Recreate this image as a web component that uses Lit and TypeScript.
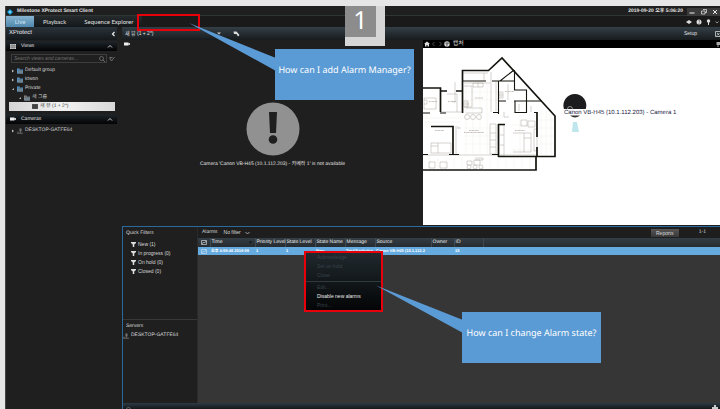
import { LitElement, html, css, svg } from "lit";
import { customElement } from "lit/decorators.js";

const base = css`
  * { box-sizing: border-box; }
  button, input, a {
    font: inherit; color: inherit; border: 0; padding: 0; margin: 0;
    background: none; border-radius: 0; text-align: left; text-decoration: none;
  }
  svg { display: block; flex: none; }
  ul { list-style: none; margin: 0; padding: 0; }
  h2 { margin: 0; font: inherit; }
`;

const folder = (c: string) => html`<svg width="6" height="6" viewBox="0 0 12 12" aria-hidden="true">
  <path d="M0 1h5l1 2h6v8H0z" fill=${c}/><path d="M2 5h10v6H1z" fill="#6f8391"/><path d="M1 4h10" stroke="#222" stroke-width=".8"/></svg>`;
const gridIcon = (c: string) => html`<svg width="6" height="5" viewBox="0 0 12 10" aria-hidden="true">
  <rect width="12" height="10" fill=${c}/><path d="M4 0v10M8 0v10M0 3.5h12M0 6.5h12" stroke="#222" stroke-width=".7"/></svg>`;
const cameraIcon = html`<svg width="6" height="4" viewBox="0 0 12 8" aria-hidden="true">
  <path d="M0 1h9v2l3-1v4l-3-1v2H0z" fill="#eee"/></svg>`;
const serverIcon = html`<svg width="6" height="6" viewBox="0 0 12 12" aria-hidden="true">
  <path d="M5 1h4v6H5z" fill="#777"/><path d="M7 7v3M0 10.500h12M2 7v3" stroke="#777" stroke-width="1.6"/></svg>`;
const funnel = html`<svg width="5" height="5" viewBox="0 0 10 10" aria-hidden="true">
  <path d="M0 0h10v2L6.500 5v5h-3V5L0 2z" fill="#ddd"/></svg>`;
const chevronUp = html`<svg width="6" height="5" viewBox="0 0 12 10" aria-hidden="true">
  <path d="M2 7l4-4 4 4" fill="none" stroke="#ccc" stroke-width="2"/></svg>`;
const picture = (c: string) => html`<svg width="6" height="5" viewBox="0 0 12 10" aria-hidden="true">
  <path d="M1 1h10v8H1zM2 8l3-4 2 2 3-4" fill="none" stroke=${c} stroke-width="1.3"/></svg>`;

@customElement("side-panel")
export class SidePanel extends LitElement {
  static styles = [base, css`
    :host { display: block; background: #1f1f1f; color: #cfcfcf; line-height: 9px; }
    .brand {
      display: flex; align-items: center; justify-content: space-between; height: 13px;
      padding: 0 1px 0 3px; font-size: 6px; color: #f0f0f0;
      background: linear-gradient(#2b343b, #14181b);
    }
    .head {
      display: flex; align-items: center; gap: 5px; height: 10px; padding: 0 4px;
      color: #e0e0e0; background: linear-gradient(#1f262b, #020304); margin-top: 1px;
    }
    .head button { margin-left: auto; }
    .search { display: flex; align-items: center; height: 9px; margin: 3px 2px 3px 5px; gap: 2px; }
    .search label {
      display: flex; flex: 1; align-items: center; border: 1px solid #3d3d3d; height: 9px; padding: 0 1px 0 2px; min-width: 0;
    }
    input { flex: 1; min-width: 0; height: 7px; outline: 0; font-style: italic; }
    input::placeholder { color: #6e6e6e; opacity: 1; }
    li { display: flex; align-items: center; gap: 2px; height: 9px; white-space: nowrap; }
    .l1 { padding-left: 5px; }
    .l2 { padding-left: 12px; }
    .picked { margin: 0 2px 3px 3px; padding-left: 23px; color: #444; background: linear-gradient(90deg, #d4d4d4, #f2f2f2 50%, #d8d8d8); }
    .devices { padding-top: 2px; }
  `];

  private arrow(open: boolean) {
    return html`<svg width="4" height="4" viewBox="0 0 8 8" aria-hidden="true">
      <path d=${open ? "M6 2v4H2z" : "M2 1l4 3-4 3z"} fill="#bbb"/></svg>`;
  }

  render() {
    return html`
      <div class="brand">XProtect
        <button aria-label="Collapse panel"><svg width="5" height="6" viewBox="0 0 10 12"><path d="M7 2L3 6l4 4" fill="none" stroke="#eee" stroke-width="2.4"/></svg></button>
      </div>
      <div class="head">${gridIcon("#ccc")}<h2>Views</h2><button aria-label="Fold views">${chevronUp}</button></div>
      <div class="search">
        <label><input type="text" aria-label="Search views and cameras" placeholder="Search views and cameras..." />
          <svg width="6" height="6" viewBox="0 0 12 12" aria-hidden="true"><circle cx="5" cy="5" r="4" fill="none" stroke="#888" stroke-width="1.3"/><path d="M8 8l4 4" stroke="#888" stroke-width="1.5"/></svg>
        </label>
        <button aria-label="Clear search"><svg width="6" height="6" viewBox="0 0 12 12"><path d="M1 3l4 7 6-8M2 3h5" fill="none" stroke="#777" stroke-width="1.8"/></svg></button>
      </div>
      <ul>
        <li class="l1">${this.arrow(false)}${folder("#5a9bd0")}Default group</li>
        <li class="l1">${this.arrow(false)}${folder("#5a9bd0")}ktwon</li>
        <li class="l1">${this.arrow(true)}${folder("#5a9bd0")}Private</li>
        <li class="l2">${this.arrow(true)}${folder("#888")}새 그룹</li>
        <li class="picked">${gridIcon("#555")}새 뷰 (1 + 2*)</li>
      </ul>
      <div class="head">${cameraIcon}<h2>Cameras</h2><button aria-label="Fold cameras">${chevronUp}</button></div>
      <ul class="devices"><li class="l1">${this.arrow(false)}${serverIcon}DESKTOP-GATFE64</li></ul>`;
  }
}

@customElement("floor-plan")
export class FloorPlan extends LitElement {
  static styles = [base, css`
    :host { display: flex; flex-direction: column; background: #fff; min-width: 0; }
    .bar { display: flex; align-items: center; gap: 1px; height: 8px; padding-left: 1px; background: #000; color: #ddd; font-size: 6px; line-height: 8px; }
    .bar svg:last-child { margin-left: auto; }
    .plan { width: 100%; height: auto; }
    .wall { fill: none; stroke: #14140f; stroke-width: 1.7; }
    .thin { fill: none; stroke: #14140f; stroke-width: 1.1; }
    .fit { fill: none; stroke: #aaa69f; stroke-width: .5; }
    .tile { fill: none; stroke: #eeece9; stroke-width: .5; }
    .tag { font-family: "Liberation Sans", sans-serif; font-size: 6px; fill: #224; }
  `];

  render() {
    return html`
      <div class="bar">
        <svg width="6" height="6" viewBox="0 0 12 12" aria-hidden="true"><path d="M6 1l6 5h-2v5H7V8H5v3H2V6H0z" fill="#ddd"/></svg>
        <svg width="12" height="6" viewBox="0 0 24 12" aria-hidden="true"><path d="M7 2L3 6l4 4M17 2l4 4-4 4" fill="none" stroke="#777" stroke-width="1.3"/></svg>
        <svg width="6" height="6" viewBox="0 0 12 12" aria-hidden="true"><circle cx="6" cy="6" r="5.5" fill="#ddd"/><path d="M6 1v10M2 4l5 1-2 4M8 2l1 3 3 1" fill="none" stroke="#222"/></svg>
        <span>&nbsp;캡처</span>
        <svg width="4" height="5" viewBox="0 0 8 10" aria-hidden="true"><path d="M1 0h7v6H5v4H3V6H1z" fill="#aaa"/></svg>
      </div>
      <svg class="plan" viewBox="423 48 297 177" role="img" aria-label="Floor plan">${svg`
        <path class="tile" d="M466 84v70M473 84v70M480 84v70M487 84v70M464 92h34M464 100h34M464 128h34M464 136h34M464 144h34M430 158v11M438 158v11M446 158v11M454 158v11M462 158v11M482 158v11M490 158v11M498 158v11M506 158v11M514 158v11M522 158v11M530 158v11M541 110v45M546 110v45M551 115v40M538 120h16M538 128h16M538 136h16M538 144h16M424 118h37M424 122h37M520 115v40M512 125h24M512 150h24"/>
        <path class="fit" d="M462 73h26M484 73v8M491 72v40M496 82v29M441 112h20M455 82v20h-3M447 94h10v18M464 83h26M464 86h8v21h-8M473 83h10v4h-10zM478 83v4M464 101h4v6h-4zM466 108h16v5h-16M424 98h12v11h-12zM424 100h3v4h-3M431 143h20v10h-20zM438 143v10M431 146h7M456 126v28M458 128h3M458 126v3M490 124h6v30h-6zM490 133h6M490 140h6M490 147h6M500 125h4v31h-4M500 135h4M500 145h4M513 133h18v19h-18M524 133v19M524 138h7M521 120h6v6h-6zM528 121h7v6h-7zM534 129h3v22h-3zM499 92h4v6h-4zM508 84v16M519 104v7M531 106v6M504 112v5h5M429 162h6v6h-6zM440 162h7v6h-7zM467 161h5v4h-5zM474 160h6v5h-6zM475 158h8v2h-8M423 155h75M500 155h37"/>
        <g class="fit"><circle cx="467" cy="117" r="2.5"/><circle cx="473" cy="117" r="2.5"/><circle cx="479" cy="117" r="2.5"/>
          <circle cx="467" cy="104" r="1.4"/><circle cx="501" cy="95" r="1.3"/><circle cx="469" cy="167" r="2"/><circle cx="475" cy="167" r="2"/><circle cx="481" cy="167" r="2"/></g>
        <path stroke="#b3aaa2" stroke-width=".8" stroke-dasharray="1 .4" d="M429 101.500h8M448 101.500h8M475 98h8M435 130.500h9M469 130.500h10M464 132.500h20M505 91.500h9M515 130.500h10"/>
        <path class="wall" d="M423 88h17.500v24M441 91h6M456 91h7M462.500 113V70.500h26L502 58l53 58v40.500h-57M536 156v14H423M431 126.500h22V154M498.500 124v33M498 124.500h7M537 112v25M537 147v9"/>
        <path class="thin" d="M462 81h24M492 81h23M500 81l14-11M514.500 70v20h12v23M498.500 81v33M493 112.500h6M498 101h8M514 101h27M515 101v11.500h12M534 112.500h3M423 113h7M440 113h6M423 154.500h5M449 154.500h10M492 154.500h6"/>
        <path fill="#1c1b1d" d="M563.900 109a11.500 11.500 0 1 1 21.900 0z"/>
        <path fill="#333" d="M570 115.500h10q-5 4-10 0z"/>
        <circle cx="570" cy="109" r="2.500" fill="none" stroke="#ddd" stroke-width=".6"/>
        <path fill="#bfe6ec" d="M573 122h4l2 10h-7z"/>
        <text class="tag" x="564" y="114">Canon VB-H45 (10.1.112.203) - Camera 1</text>`}
      </svg>`;
  }
}

@customElement("alarm-manager")
export class AlarmManager extends LitElement {
  static styles = [base, css`
    :host {
      display: grid; grid-template: 1fr 6px / 75px 1fr; background: #1f1f1f; color: #d8d8d8;
      border: solid #2a6a9c; border-width: 1px 0 0 1px; line-height: 9px;
    }
    .filters { display: flex; flex-direction: column; padding-top: 2px; border-right: 1px solid #2a2a2a; white-space: nowrap; }
    .filters h2 { padding-left: 3px; }
    .filters ul { padding: 2px 0 0 8px; }
    .filters button, .server { display: flex; align-items: center; gap: 2px; height: 9px; }
    .servers { margin-top: 43px; padding-top: 2px; border-top: 1px solid #383838; }
    .list { background: #363636; min-width: 0; }
    .tools { display: flex; align-items: center; gap: 6px; height: 11px; padding: 0 14px 0 4px; background: #1e1e1e; }
    .menu { display: flex; align-items: center; gap: 4px; }
    .report { margin-left: auto; width: 28px; height: 8px; line-height: 8px; text-align: center; background: linear-gradient(#555, #383838); }
    .count { margin-left: 14px; }
    table { width: 100%; table-layout: fixed; border-collapse: collapse; }
    th, td { padding: 0 0 0 1px; font-weight: 400; text-align: left; white-space: nowrap; }
    thead tr { height: 9px; color: #e8e8e8; background: linear-gradient(#343e45, #252c31); }
    th + th { border-left: 1px solid #3f494f; }
    tbody tr { height: 8px; color: #fff; background: #66abdf; line-height: 8px; }
    td { font-size: 4px; font-weight: 700; }
    td:first-child, th:first-child { padding-left: 3px; }
    .c-pic { width: 12px; } .c-time { width: 45px; } .c-p { width: 30px; } .c-src { width: 56px; } .c-own { width: 23px; } .c-id { width: 29px; }
    .sort { display: flex; align-items: center; justify-content: space-between; padding-right: 3px; }
    .status { grid-column: 1 / -1; display: flex; justify-content: space-between; align-items: flex-end; padding: 0 2px 0 3px; background: linear-gradient(#2c3a44, #14181b); }
  `];

  render() {
    const filters = ["New (1)", "In progress (0)", "On hold (0)", "Closed (0)"];
    const heads = ["Priority Level", "State Level", "State Name", "Message", "Source", "Owner", "ID"];
    return html`
      <div class="filters">
        <h2>Quick Filters</h2>
        <ul>${filters.map((f) => html`<li><button>${funnel}${f}</button></li>`)}</ul>
        <div class="servers"><h2>Servers</h2><div class="server">${serverIcon}DESKTOP-GATFE64</div></div>
      </div>
      <div class="list">
        <div class="tools"><span>Alarms</span>
          <button class="menu">No filter<svg width="5" height="4" viewBox="0 0 10 8" aria-hidden="true"><path d="M1 2l4 4 4-4" fill="none" stroke="#bbb" stroke-width="1.6"/></svg></button>
          <button class="report">Reports</button><span class="count">1-1</span>
        </div>
        <table>
          <colgroup><col class="c-pic"><col class="c-time"><col class="c-p"><col class="c-p"><col class="c-p"><col class="c-p"><col class="c-src"><col class="c-own"><col class="c-id"><col></colgroup>
          <thead><tr><th>${picture("#ddd")}</th>
            <th><div class="sort">Time<svg width="3" height="3" viewBox="0 0 6 6" aria-hidden="true"><path d="M0 1h6L3 5z" fill="#111"/></svg></div></th>
            ${heads.map((h) => html`<th>${h}</th>`)}<th></th></tr></thead>
          <tbody><tr><td>${picture("#c9e0f0")}</td><td>오후 4:59:46 2019-09</td><td>1</td><td>1</td><td>New</td><td>Test(Analytics</td><td>Canon VB-H45 (10.1.112.2</td><td></td><td>15</td><td></td></tr></tbody>
        </table>
      </div>
      <div class="status">
        <svg width="5" height="2" viewBox="0 0 10 4" aria-hidden="true"><path d="M1 4q4-7 8 0" fill="none" stroke="#bbb"/></svg>
        <svg width="6" height="4" viewBox="0 0 12 8" aria-hidden="true"><path d="M4 0h4v4h4v4H0V4h4z" fill="#ccc"/></svg>
      </div>`;
  }
}

@customElement("app-root")
export class AppRoot extends LitElement {
  static styles = [base, css`
    :host {
      display: flex; position: relative; min-height: 100vh; padding: 6px 0 0 5px; overflow: hidden;
      background: #e6e6e6; font: 5px/9px "Liberation Sans", "Noto Sans CJK KR", sans-serif; box-sizing: border-box;
      text-rendering: geometricPrecision;
    }
    .window { flex: 1; min-width: 0; display: flex; flex-direction: column; background: #1f1f1f; color: #e0e0e0; border-left: 1px solid #444; }
    .title { display: flex; align-items: center; height: 10px; padding: 2px 0 0 1px; gap: 4px; border-bottom: 1px solid #303536; font-weight: 700; }
    .title time { margin-left: auto; }
    .sys { display: flex; width: 33px; background: #3b3b3b; justify-content: space-between; padding: 1px 2px; }
    nav { display: flex; align-items: stretch; height: 11px; font-size: 6px; font-family: Lato, sans-serif; background: #1a1a1a; }
    nav button { padding: 0 9px; text-align: center; background: linear-gradient(#252a2d, #14181a); }
    nav .on { width: 28px; padding: 0; color: #cfe4f2; background: linear-gradient(#87b3cf, #4f88ad); }
    .status { display: flex; align-items: center; margin-left: auto; gap: 4px; padding-right: 1px; }
    .body { flex: 1; display: grid; grid-template-columns: 111px 1fr; column-gap: 5px; }
    .main { display: flex; flex-direction: column; min-width: 0; }
    .bar { display: flex; align-items: center; height: 13px; padding-left: 3px; background: linear-gradient(#333f46, #171b1e); }
    .view { display: flex; align-items: center; justify-content: space-between; width: 96px; }
    .bar .pen { margin-left: 12px; }
    .bar .setup { margin-left: auto; }
    .bar .full { margin-left: 18px; }
    .panes { display: grid; grid-template-columns: 301fr 297fr; }
    .camera { padding: 2px; }
    .lost { display: flex; flex-direction: column; align-items: center; gap: 4px; padding-top: 56px; text-align: center; }
    .lost p { margin: 0; }
    alarm-manager { flex: 1; margin-top: 1px; }
    .badge {
      position: absolute; left: 345px; top: 6px; width: 40px; height: 40px; border: solid #d6d6d6; border-width: 0 9px 9px 0;
      background: #8c8c8c; color: #fff; font: 25px/28px "Noto Sans", sans-serif; text-align: center;
    }
    .mark { position: absolute; border: 2px solid #e8000b; }
    .tab-mark { left: 137px; top: 14px; width: 63px; height: 17px; }
    .context { left: 304px; top: 251px; width: 79px; height: 61px; background: linear-gradient(#20292e, #040506); color: #39434a; padding-left: 11px; }
    .context button { display: block; height: 9px; }
    .context hr { margin: 1px 0 1px -11px; border: 0; border-top: 1px solid #333a3e; }
    .context .live { color: #eee; }
    .wedges { position: absolute; left: 0; top: 0; }
    .note { position: absolute; width: 139px; height: 51px; background: #5b9bd5; color: #fff; text-align: center; white-space: nowrap; font: 9px/42px "Noto Sans", sans-serif; }
    .ask-add { left: 275px; top: 49px; }
    .ask-state { left: 462px; top: 312px; }
  `];

  render() {
    return html`
      <div class="window">
        <header class="title">
          <svg width="6" height="6" viewBox="0 0 12 12" aria-hidden="true"><path d="M6 0l6 6-6 6-6-6z" fill="#1ba3dd"/><circle cx="6" cy="6" r="2" fill="#9be0ff"/></svg>
          <span>Milestone XProtect Smart Client</span>
          <time>2019-09-20 오후 5:06:20</time>
          <div class="sys">
            <button aria-label="Minimize"><svg width="6" height="6" viewBox="0 0 12 12"><path d="M1 8h10" stroke="#eee" stroke-width="2"/></svg></button>
            <button aria-label="Restore"><svg width="6" height="6" viewBox="0 0 12 12"><path d="M4 1h7v6H8M1 4h7v6H1z" fill="none" stroke="#ddd" stroke-width="1.6"/></svg></button>
            <button aria-label="Close"><svg width="6" height="6" viewBox="0 0 12 12"><path d="M2 2l8 8M10 2l-8 8" stroke="#eee" stroke-width="2"/></svg></button>
          </div>
        </header>
        <nav>
          <button class="on">Live</button><button>Playback</button><button>Sequence Explorer</button>
          <div class="status">
            <svg width="6" height="6" viewBox="0 0 12 12" aria-hidden="true"><path d="M0 6l6-4 6 4-6 4z" fill="#ddd"/></svg>
            <svg width="6" height="6" viewBox="0 0 12 12" aria-hidden="true"><circle cx="6" cy="6" r="5" fill="#ddd"/><path d="M5 3h2v4M5 9h2" stroke="#333" fill="none"/></svg>
            <svg width="5" height="6" viewBox="0 0 10 12" aria-hidden="true"><circle cx="5" cy="4" r="3.500" fill="#ddd"/><path d="M4 6h2v6H4z" fill="#ddd"/></svg>
            <svg width="4" height="6" viewBox="0 0 8 12" aria-hidden="true"><path d="M1 5l3 3 3-3" fill="none" stroke="#bbb" stroke-width="1.500"/></svg>
          </div>
        </nav>
        <div class="body">
          <side-panel></side-panel>
          <main class="main">
            <div class="bar">
              <button class="view">새 뷰 (1 + 2*)<svg width="4" height="3" viewBox="0 0 8 6" aria-hidden="true"><path d="M0 1h8L4 5z" fill="#ccc"/></svg></button>
              <svg class="pen" width="7" height="6" viewBox="0 0 14 12" aria-hidden="true"><path d="M1 1h6l6 7-3 3-3-5H2z" fill="#ddd"/></svg>
              <button class="setup">Setup</button>
              <svg class="full" width="5" height="6" viewBox="0 0 10 12" aria-hidden="true"><path d="M1 1h9M1 1v10h9M4 4l5 5M9 4L4 9" fill="none" stroke="#ddd" stroke-width="1.500"/></svg>
            </div>
            <div class="panes">
              <section class="camera">${cameraIcon}
                <div class="lost">
                  <svg width="54" height="54" viewBox="0 0 54 54" aria-hidden="true"><circle cx="27" cy="27" r="26.500" fill="#919191"/><path d="M23 10h8l-1 21h-6z" fill="#1f1f1f"/><circle cx="27" cy="37.500" r="4.300" fill="#1f1f1f"/></svg>
                  <p>Camera 'Canon VB-H45 (10.1.112.203) - 카메라 1' is not available</p>
                </div>
              </section>
              <floor-plan></floor-plan>
            </div>
            <alarm-manager></alarm-manager>
          </main>
        </div>
      </div>
      <div class="mark tab-mark"></div>
      <div class="mark context">
        <button disabled>Acknowledge</button><button disabled>Set on hold</button><button disabled>Close</button>
        <hr /><button disabled>Edit...</button><button class="live">Disable new alarms</button><button disabled>Print...</button>
      </div>
      <svg class="wedges" width="470" height="340" viewBox="0 0 470 340" aria-hidden="true">
        <path d="M189 23L276 58v13zM376 285.500L463 320v13z" fill="#5b9bd5"/></svg>
      <div class="note ask-add">How can I add Alarm Manager?</div>
      <div class="note ask-state">How can I change Alarm state?</div>
      <div class="badge">1</div>`;
  }
}
